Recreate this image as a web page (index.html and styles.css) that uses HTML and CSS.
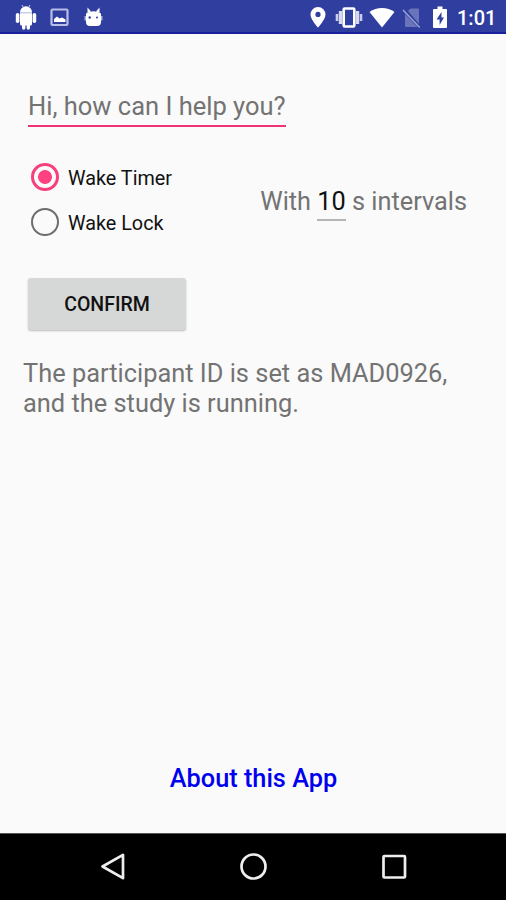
FILE: index.html
```html
<!DOCTYPE html>
<html lang="en">
<head>
  <meta charset="UTF-8" />
  <meta name="viewport" content="width=device-width, initial-scale=1.0"/>
  <title>Wake Study</title>
  <link rel="stylesheet" href="styles.css">
</head>
<body>

  <header class="status-bar">
    <div class="status-left">
      <!-- Android robot -->
      <svg width="22" height="26" viewBox="0 0 22 26" fill="#fff">
        <path d="M5 9h12v11a1.500 1.500 0 0 1-1.500 1.500h-.5V24a1.700 1.700 0 0 1-3.400 0v-2.500h-1.200V24a1.700 1.700 0 0 1-3.400 0v-2.500H6.500A1.500 1.500 0 0 1 5 20z"/>
        <path d="M5 8.300a6 6 0 0 1 12 0z"/>
        <path d="M5 8h12v1.500H5z" fill="#c9cdec"/>
        <path d="M7 1l1.500 2.500M15 1l-1.500 2.500" stroke="#c9cdec"/>
        <rect x=".8" y="9" width="3.600" height="10" rx="1.800"/>
        <rect x="17.600" y="9" width="3.600" height="10" rx="1.800"/>
      </svg>
      <!-- Picture -->
      <svg width="20" height="20" viewBox="0 0 20 20">
        <rect x="1.500" y="2.500" width="16" height="15.500" rx="1" fill="none" stroke="#b9bee6" stroke-width="2.200"/>
        <path d="M4 15v-3l3-2.500 2.500 2 2.500-1 3.500 2V15z" fill="#fff"/>
      </svg>
      <!-- Bot head -->
      <svg width="20" height="22" viewBox="0 0 20 22">
        <path d="M2 7.500Q9.500 3 17 7.500V16q0 4-4 4H6q-4 0-4-4z" fill="#fff"/>
        <path d="M3.500 7L3.500 1.500 7 5.500zM15.500 7V1.500L12 5.500z" fill="#fff"/>
        <path d="M1.200 10v4.500M17.800 10v4.500" stroke="#c9cdec" stroke-width="1.200"/>
        <circle cx="5.700" cy="11.500" r="1.200" fill="#303f9f"/>
        <circle cx="13" cy="11.500" r="1" fill="#303f9f"/>
      </svg>
    </div>
    <div class="status-right">
      <!-- Location -->
      <svg class="pin" width="16" height="22" viewBox="0 0 16 22">
        <path fill="#fff" fill-rule="evenodd" d="M8 1a7.500 7.500 0 0 0-7.500 7.500C.5 13.500 8 21.500 8 21.500s7.500-8 7.500-13A7.500 7.500 0 0 0 8 1zm0 4.800a2.600 2.600 0 1 1 0 5.200 2.600 2.600 0 0 1 0-5.200z"/>
      </svg>
      <!-- Vibrate -->
      <svg class="vibrate" width="28" height="22" viewBox="0 0 28 22">
        <path d="M5.500 5v13M22.500 5v13" stroke="#d5d8f0" stroke-width="3.400"/>
        <path d="M2 8v7M26 8v7" stroke="#c9cdec" stroke-width="2.600"/>
        <rect x="8.700" y="2.500" width="10.600" height="18" rx="1" fill="none" stroke="#fff" stroke-width="2.600"/>
      </svg>
      <!-- Wifi -->
      <svg class="wifi" width="26" height="22" viewBox="0 0 26 22">
        <path fill="#fff" d="M13 21.500L.5 6Q6 2 13 2t12.500 4z"/>
      </svg>
      <!-- No SIM -->
      <svg class="sim" width="20" height="22" viewBox="0 0 20 22">
        <path fill="#6974ba" d="M8.500 2.500H16q1 0 1 1V18L6 5zM3 8l12.500 13H4q-1 0-1-1z"/>
        <path d="M1 4l16.700 17.500" stroke="#9aa2d3" stroke-width="1.500"/>
      </svg>
      <!-- Battery -->
      <svg class="battery" width="14" height="22" viewBox="0 0 14 22">
        <path fill="#fff" d="M4.500 .5h5V3H13q1 0 1 1v17q0 1-1 1H1q-1 0-1-1V4q0-1 1-1h3.500z"/>
        <path fill="#303f9f" d="M8.500 6L3.500 13.500h3.100v5.500L11 11.500H8.500z"/>
      </svg>
      <span class="clock">1:01</span>
    </div>
  </header>

  <main class="content">
    <input class="question" type="text" placeholder="Hi, how can I help you?">

    <div class="options">
      <div class="radio-group">
        <label class="radio"><input type="radio" name="wake" checked><span>Wake Timer</span></label>
        <label class="radio"><input type="radio" name="wake"><span>Wake Lock</span></label>
      </div>
      <div class="interval">With <span class="seconds">10</span> s intervals</div>
    </div>

    <button class="confirm">CONFIRM</button>

    <p class="message">The participant ID is set as MAD0926,<br>and the study is running.</p>

    <a class="about">About this App</a>
  </main>

  <nav class="nav-bar">
    <svg width="28" height="30" viewBox="0 0 28 30">
      <path d="M3.500 14.500L24 2.800v23.400z" fill="none" stroke="#eee" stroke-width="2.700" stroke-linejoin="round"/>
    </svg>
    <svg width="28" height="30" viewBox="0 0 28 30">
      <circle cx="13.500" cy="14.500" r="12" fill="none" stroke="#eee" stroke-width="2.700"/>
    </svg>
    <svg width="28" height="30" viewBox="0 0 28 30">
      <rect x="3.500" y="4" width="21.500" height="21.500" rx="1" fill="none" stroke="#eee" stroke-width="2.700"/>
    </svg>
  </nav>

</body>
</html>
```
FILE: styles.css
```css
* {
  box-sizing: border-box;
  margin: 0;
  padding: 0;
}

body {
  font-family: Roboto, sans-serif;
  background: #fafafa;
  color: #737373;
  height: 900px;
  display: flex;
  flex-direction: column;
  overflow: hidden;
}

svg {
  display: block;
  flex: none;
}

.status-bar {
  height: 34px;
  flex: none;
  background: #303f9f;
  border-bottom: 2px solid #1a1f9c;
  display: flex;
  justify-content: space-between;
  padding: 4px 11px 0 15px;
}

.status-left {
  display: flex;
  align-items: center;
  height: 26px;
  gap: 13px;
}

.status-left svg:last-child {
  margin-left: 1px;
}

.status-right {
  display: flex;
  align-items: center;
  height: 26px;
}

.vibrate {
  margin-left: 9px;
}

.wifi {
  margin-left: 6px;
}

.sim {
  margin-left: 7px;
}

.battery {
  margin-left: 11px;
}

.clock {
  width: 38px;
  margin-left: 10px;
  padding-top: 2px;
  font-size: 20px;
  font-weight: 500;
  line-height: 26px;
  color: #fff;
  white-space: nowrap;
}

.content {
  flex: 1;
  display: flex;
  flex-direction: column;
  align-items: flex-start;
  padding: 52px 23px 0;
}

.question {
  width: 258px;
  height: 41px;
  margin-left: 5px;
  padding-top: 1px;
  border: none;
  border-bottom: 2px solid #ee3377;
  outline: none;
  background: none;
  font-family: inherit;
  font-size: 25.5px;
}

.question::placeholder {
  color: #737373;
  opacity: 1;
}

.options {
  align-self: stretch;
  display: flex;
  justify-content: space-between;
  margin-top: 27px;
}

.radio-group {
  padding-left: 8px;
}

.radio {
  display: flex;
  align-items: center;
  height: 45px;
  gap: 9px;
  font-size: 19.8px;
  color: #111;
}

.radio span {
  padding-top: 3px;
}

.radio input {
  appearance: none;
  width: 28px;
  height: 28px;
  border: 2.5px solid #6d6d6d;
  border-radius: 50%;
}

.radio input:checked {
  border: 3px solid #f73f7d;
  background: radial-gradient(circle, #ff4081 6.500px, transparent 7.300px);
}

.interval {
  padding: 31px 16px 0 0;
  font-size: 25.3px;
  line-height: 34px;
  white-space: nowrap;
}

.seconds {
  display: inline-block;
  height: 36px;
  border-bottom: 2px solid #b5b5b5;
  color: #111;
}

.confirm {
  width: 158px;
  height: 52px;
  margin: 34px 0 0 5px;
  padding-top: 1px;
  border: none;
  border-radius: 3px;
  background: #d6d7d7;
  box-shadow: 0 1px 2px rgba(0, 0, 0, 0.25);
  font-family: inherit;
  font-size: 19.5px;
  font-weight: 500;
  color: #111;
}

.message {
  margin-top: 28px;
  font-size: 25.4px;
  line-height: 30px;
  white-space: nowrap;
}

.about {
  align-self: center;
  margin-top: auto;
  margin-bottom: 39px;
  padding-left: 1px;
  font-size: 25.3px;
  font-weight: 500;
  line-height: 30px;
  color: #0000ee;
}

.nav-bar {
  height: 67px;
  flex: none;
  background: #000;
  border-top: 1px solid #555;
  display: flex;
  align-items: center;
  justify-content: space-between;
  padding: 0 98px 0 99px;
}
```
